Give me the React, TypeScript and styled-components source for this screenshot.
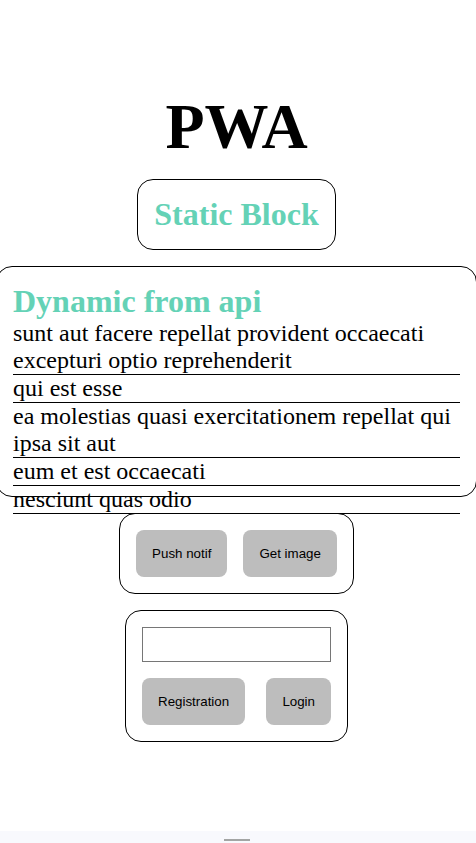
import React from "react";
import styled, { createGlobalStyle } from "styled-components";

const GlobalStyle = createGlobalStyle`
  body {
    margin: 0;
    background: #fff;
    color: #000;
    font-family: "Liberation Serif", "Times New Roman", serif;
  }
`;

const Page = styled.div`
  display: flex;
  flex-direction: column;
  min-height: 100vh;
  overflow-x: hidden;
`;

const Content = styled.main`
  flex: 1;
  display: flex;
  flex-direction: column;
  align-items: center;
  justify-content: center;
  gap: 16px;
  padding-right: 3px;
`;

const Title = styled.h1`
  margin: 0;
  font-size: 64px;
  line-height: 73px;
`;

const Card = styled.section`
  box-sizing: border-box;
  padding: 16px;
  border: 1px solid #000;
  border-radius: 16px;
`;

const ApiCard = styled(Card)`
  align-self: stretch;
  height: 231px;
  margin: 0 -4px;
`;

const Heading = styled.h2`
  margin: 0;
  color: #64d2b6;
  font-size: 32px;
  line-height: 37px;
`;

const PostList = styled.ul`
  margin: 0;
  padding: 0;
  list-style: none;
`;

const Post = styled.li`
  border-bottom: 1px solid #000;
  font-size: 24px;
  line-height: 27px;
`;

const Actions = styled.div<{ $spread?: boolean }>`
  display: flex;
  justify-content: ${({ $spread }) => ($spread ? "space-between" : "center")};
  gap: 16px;
`;

const Button = styled.button`
  padding: 16px;
  border: 0;
  border-radius: 8px;
  background: #bdbdbd;
  color: #000;
  font-family: "Liberation Sans", Arial, sans-serif;
  line-height: 15px;
  cursor: pointer;
`;

const Form = styled.form`
  display: flex;
  flex-direction: column;
  gap: 16px;
`;

const TextInput = styled.input`
  box-sizing: border-box;
  width: 189px;
  height: 35px;
  padding: 8px 16px;
  border: 1px solid #767676;
  font-family: "Liberation Sans", Arial, sans-serif;
`;

const BottomBar = styled.footer`
  display: flex;
  justify-content: center;
  align-items: flex-end;
  box-sizing: border-box;
  height: 12px;
  padding: 0 2px 2px 0;
  background: #f8f9fd;
`;

const Handle = styled.div`
  width: 26px;
  height: 2px;
  background: #a3a5a4;
`;

const posts = [
  "sunt aut facere repellat provident occaecati excepturi optio reprehenderit",
  "qui est esse",
  "ea molestias quasi exercitationem repellat qui ipsa sit aut",
  "eum et est occaecati",
  "nesciunt quas odio",
];

export default function App() {
  return (
    <Page>
      <GlobalStyle />
      <Content>
        <Title>PWA</Title>
        <Card>
          <Heading>Static Block</Heading>
        </Card>
        <ApiCard>
          <Heading>Dynamic from api</Heading>
          <PostList>
            {posts.map((post) => (
              <Post key={post}>{post}</Post>
            ))}
          </PostList>
        </ApiCard>
        <Card>
          <Actions>
            <Button type="button">Push notif</Button>
            <Button type="button">Get image</Button>
          </Actions>
        </Card>
        <Card>
          <Form onSubmit={(event) => event.preventDefault()}>
            <TextInput type="text" aria-label="User name" />
            <Actions $spread>
              <Button type="button">Registration</Button>
              <Button type="submit">Login</Button>
            </Actions>
          </Form>
        </Card>
      </Content>
      <BottomBar>
        <Handle />
      </BottomBar>
    </Page>
  );
}
